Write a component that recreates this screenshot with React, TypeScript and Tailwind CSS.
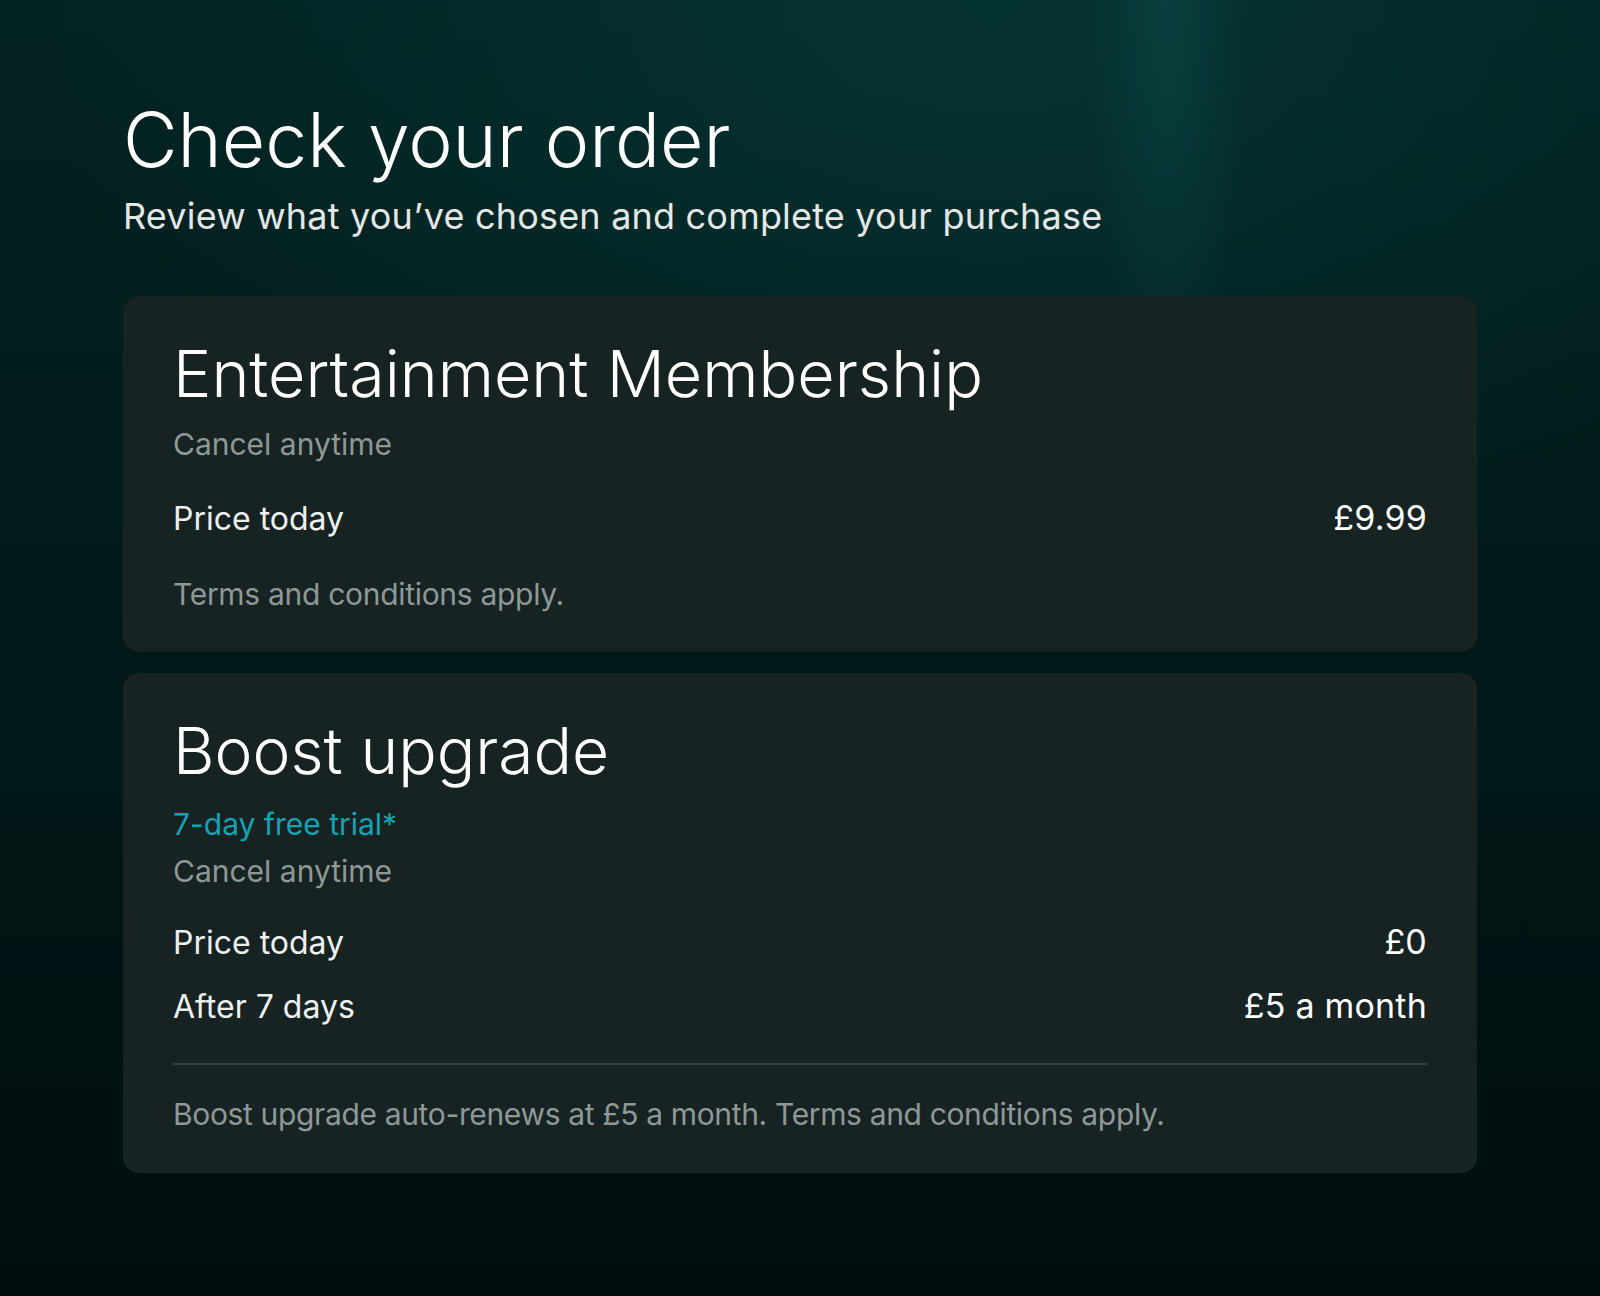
const Row = ({ label, value }: { label: string; value: string }) => (
  <div className="flex items-baseline justify-between">
    <span className="text-[32px] leading-[36px] text-[#eef0ef]">{label}</span>
    <span className="text-[34px] leading-[36px] tracking-[0.2px] text-white">{value}</span>
  </div>
);

const App = () => {
  return (
    <div className="min-h-screen w-full bg-[radial-gradient(ellipse_80px_400px_at_73%_0%,rgba(12,78,78,0.5),transparent),radial-gradient(ellipse_60%_45%_at_62%_0%,#053331,transparent),linear-gradient(180deg,#032322_0%,#021a1a_45%,#010e0f_100%)] px-[123px] pt-[102px] pb-[124px] font-['Inter','Liberation_Sans',sans-serif]">
      <h1 className="text-[75px] font-light leading-none text-white">Check your order</h1>
      <p className="mt-[21px] text-[36px] leading-none tracking-[0.2px] text-[#e4e7e6]">
        Review what you’ve chosen and complete your purchase
      </p>

      <div className="mt-[62px] flex flex-col gap-[21px]">
        <div className="rounded-2xl bg-[#172322] px-[50px] pt-[46px] pb-[40px]">
          <h2 className="text-[64.5px] font-light leading-none text-white">Entertainment Membership</h2>
          <p className="mt-[19px] text-[30px] leading-[36px] text-[#8e9897]">Cancel anytime</p>
          <div className="mt-[38px]">
            <Row label="Price today" value="£9.99" />
          </div>
          <p className="mt-[39px] text-[30px] leading-[36px] tracking-[-0.3px] text-[#8e9897]">Terms and conditions apply.</p>
        </div>

        <div className="rounded-2xl bg-[#172322] px-[50px] pt-[46px] pb-[41px]">
          <h2 className="text-[64px] font-light leading-none text-white">Boost upgrade</h2>
          <p className="mt-[23px] text-[30px] leading-[36px] text-[#15a3b3]">7-day free trial*</p>
          <p className="mt-[11px] text-[30px] leading-[36px] text-[#8e9897]">Cancel anytime</p>
          <div className="mt-[35px]">
            <Row label="Price today" value="£0" />
          </div>
          <div className="mt-[27px]">
            <Row label="After 7 days" value="£5 a month" />
          </div>
          <div className="mt-[38px] h-[2px] bg-[#374241]" />
          <p className="mt-[31px] text-[30px] leading-[36px] tracking-[-0.35px] text-[#8e9897]">
            Boost upgrade auto-renews at £5 a month. Terms and conditions apply.
          </p>
        </div>
      </div>
    </div>
  );
};

export default App;
